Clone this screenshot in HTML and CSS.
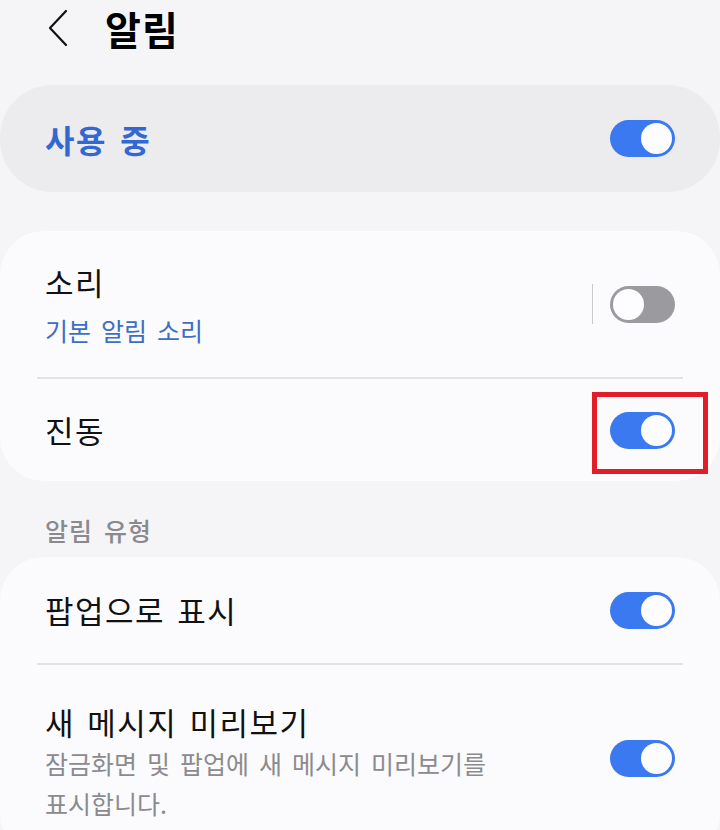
FILE: index.html
```html
<!DOCTYPE html>
<html lang="ko">
  <head>
    <meta charset="UTF-8" />
    <meta name="viewport" content="width=device-width, initial-scale=1.0" />
    <title>알림</title>
    <link rel="stylesheet" href="styles.css">
  </head>

  <body>
    <div class="header">
      <svg class="back" width="22" height="38" viewBox="0 0 22 38">
        <path d="M19 2 L3 19 L19 36" fill="none" stroke="#111" stroke-width="2.2" stroke-linecap="round" stroke-linejoin="round" />
      </svg>
      <h1 class="title">알림</h1>
    </div>

    <div class="master">
      <span class="master-label">사용 중</span>
      <div class="switch on"><span class="knob"></span></div>
    </div>

    <div class="card card-top">
      <div class="row row-tall">
        <div class="text">
          <div class="name">소리</div>
          <div class="sub blue">기본 알림 소리</div>
        </div>
        <div class="controls">
          <span class="vline"></span>
          <div class="switch off"><span class="knob"></span></div>
        </div>
      </div>
      <div class="divider"></div>
      <div class="row">
        <div class="text">
          <div class="name">진동</div>
        </div>
        <div class="controls marked">
          <div class="switch on"><span class="knob"></span></div>
          <!-- 빨간 표시 박스 -->
          <span class="highlight"></span>
        </div>
      </div>
    </div>

    <div class="section-label">알림 유형</div>

    <div class="card card-bottom">
      <div class="row row-popup">
        <div class="text">
          <div class="name">팝업으로 표시</div>
        </div>
        <div class="switch on"><span class="knob"></span></div>
      </div>
      <div class="divider"></div>
      <div class="row row-preview">
        <div class="text narrow">
          <div class="name">새 메시지 미리보기</div>
          <div class="sub gray">잠금화면 및 팝업에 새 메시지 미리보기를 표시합니다.</div>
        </div>
        <div class="switch on switch-up"><span class="knob"></span></div>
      </div>
    </div>
  </body>
</html>
```

FILE: styles.css
```css
body {
  margin: 0;
  background-color: #f5f5f7;
  font-family: "Noto Sans CJK KR", "Noto Sans", sans-serif;
  color: #111;
  overflow: hidden;
}

.header {
  display: flex;
  align-items: center;
  height: 56px;
  padding-left: 47px;
}

.back {
  display: block;
}

.title {
  margin: 0 0 0 36px;
  font-size: 39px;
  font-weight: 700;
  line-height: 56px;
  letter-spacing: 1px;
  color: #000;
}

.master {
  display: flex;
  justify-content: space-between;
  align-items: center;
  height: 107px;
  margin-top: 29px;
  padding: 0 45px;
  border-radius: 52px;
  background-color: #ececee;
}

.master-label {
  font-size: 32px;
  font-weight: 700;
  letter-spacing: 1.5px;
  word-spacing: 3px;
  color: #3368d2;
}

.card {
  background-color: #fbfbfd;
  border-radius: 44px;
}

.card-top {
  margin-top: 39px;
}

.card-bottom {
  height: 300px;
}

.row {
  display: flex;
  justify-content: space-between;
  align-items: center;
  padding: 30px 45px;
}

.row-tall {
  padding: 30px 45px 30px;
}

.row-popup {
  padding: 32px 45px;
}

.row-preview {
  padding: 36px 45px 20px;
}

.text {
  display: flex;
  flex-direction: column;
}

.narrow {
  width: 470px;
}

.name {
  font-size: 31px;
  line-height: 42px;
  letter-spacing: 1.5px;
  word-spacing: 2px;
}

.sub {
  font-size: 25px;
  line-height: 40px;
  word-spacing: 3px;
}

.blue {
  margin-top: 10px;
  line-height: 34px;
  color: #3c6ec8;
}

.gray {
  color: #8b8b8f;
}

.divider {
  height: 2px;
  margin: 0 37px;
  background-color: #e3e3e5;
}

.section-label {
  padding: 36px 45px 14px;
  font-size: 25px;
  font-weight: 500;
  line-height: 26px;
  letter-spacing: 1px;
  word-spacing: 3px;
  color: #8a8a8e;
}

.controls {
  display: flex;
  align-items: center;
}

.marked {
  position: relative;
}

.vline {
  width: 1px;
  height: 40px;
  margin-right: 17px;
  background-color: #c9c9cc;
}

.switch {
  display: flex;
  align-items: center;
  box-sizing: border-box;
  width: 65px;
  height: 37px;
  padding: 3px;
  border-radius: 19px;
}

.switch.on {
  justify-content: flex-end;
  background-color: #3a79ef;
}

.switch.off {
  justify-content: flex-start;
  background-color: #9b9b9f;
}

.switch-up {
  margin-bottom: 8px;
}

.knob {
  width: 31px;
  height: 31px;
  border-radius: 50%;
  background-color: #fdfdff;
}

.highlight {
  position: absolute;
  left: -18px;
  top: -20px;
  width: 106px;
  height: 72px;
  border: 5px solid #e21d28;
}
```
